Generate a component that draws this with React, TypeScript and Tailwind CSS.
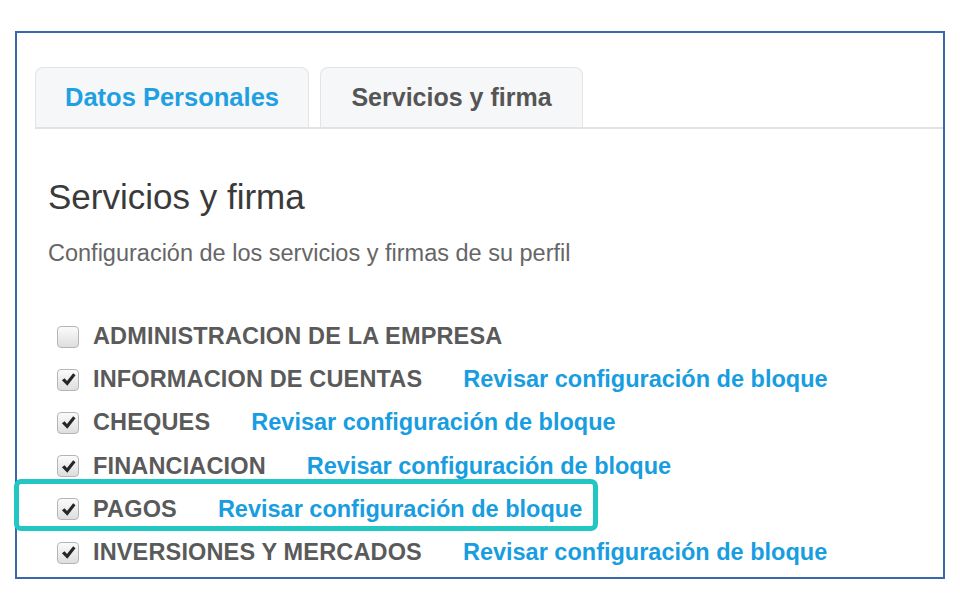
import React from "react";

const rows = [
  { label: "ADMINISTRACION DE LA EMPRESA", checked: false, link: false },
  { label: "INFORMACION DE CUENTAS", checked: true, link: true },
  { label: "CHEQUES", checked: true, link: true },
  { label: "FINANCIACION", checked: true, link: true },
  { label: "PAGOS", checked: true, link: true },
  { label: "INVERSIONES Y MERCADOS", checked: true, link: true },
];

const CheckBox = ({ checked }: { checked: boolean }) => (
  <span className="flex h-[22px] w-[22px] shrink-0 items-center justify-center rounded-[4px] border border-[#b5b5b5] bg-gradient-to-b from-[#fbfbfb] to-[#dedede]">
    {checked && (
      <svg width="17" height="17" viewBox="0 0 16 16">
        <path d="M1.8 8.8 L4.3 6.8 L6.6 9.5 L12.4 2.2 L14.6 4 L6.9 13.8 Z" fill="#262626" />
      </svg>
    )}
  </span>
);

export default function App() {
  return (
    <div className="relative h-[605px] w-[960px] overflow-hidden bg-white font-['Liberation_Sans',Arial,sans-serif]">
      <div className="ml-[15px] mt-[31px] h-[548px] w-[930px] border-2 border-[#3a68b0]">
        <div className="ml-[18px] mt-[34px] flex gap-[11px] border-b-2 border-[#e2e2e2]">
          <div className="flex h-[60px] w-[274px] items-center justify-center rounded-t-[8px] border border-b-0 border-[#e4e4e4] bg-[#f6f7f8] text-[25.5px] font-bold text-[#1ea0e2]">
            Datos Personales
          </div>
          <div className="flex h-[60px] w-[263px] items-center justify-center rounded-t-[8px] border border-b-0 border-[#e4e4e4] bg-[#f6f7f8] text-[25px] font-bold text-[#555555]">
            Servicios y firma
          </div>
        </div>

        <div className="pl-[31px]">
          <h1 className="mt-[48px] text-[35px] leading-[40px] text-[#3a3a3a]">Servicios y firma</h1>
          <p className="mt-[22px] text-[23.5px] leading-[28px] text-[#666666]">
            Configuración de los servicios y firmas de su perfil
          </p>
          <div className="ml-[9px] mt-[48px] flex flex-col">
            {rows.map((r) => (
              <div key={r.label} className="flex h-[43.2px] items-center">
                <CheckBox checked={r.checked} />
                <span className="ml-[14px] text-[23.5px] font-bold tracking-[0.15px] text-[#5a5a5a]">{r.label}</span>
                {r.link && (
                  <a className="ml-[41px] text-[23.5px] font-bold text-[#179de0]" href="#">
                    Revisar configuración de bloque
                  </a>
                )}
              </div>
            ))}
          </div>
        </div>
      </div>

      <div className="pointer-events-none absolute left-[14px] top-[479px] h-[52px] w-[584px] rounded-[7px] border-[5px] border-[#22c7c3]" />
    </div>
  );
}
